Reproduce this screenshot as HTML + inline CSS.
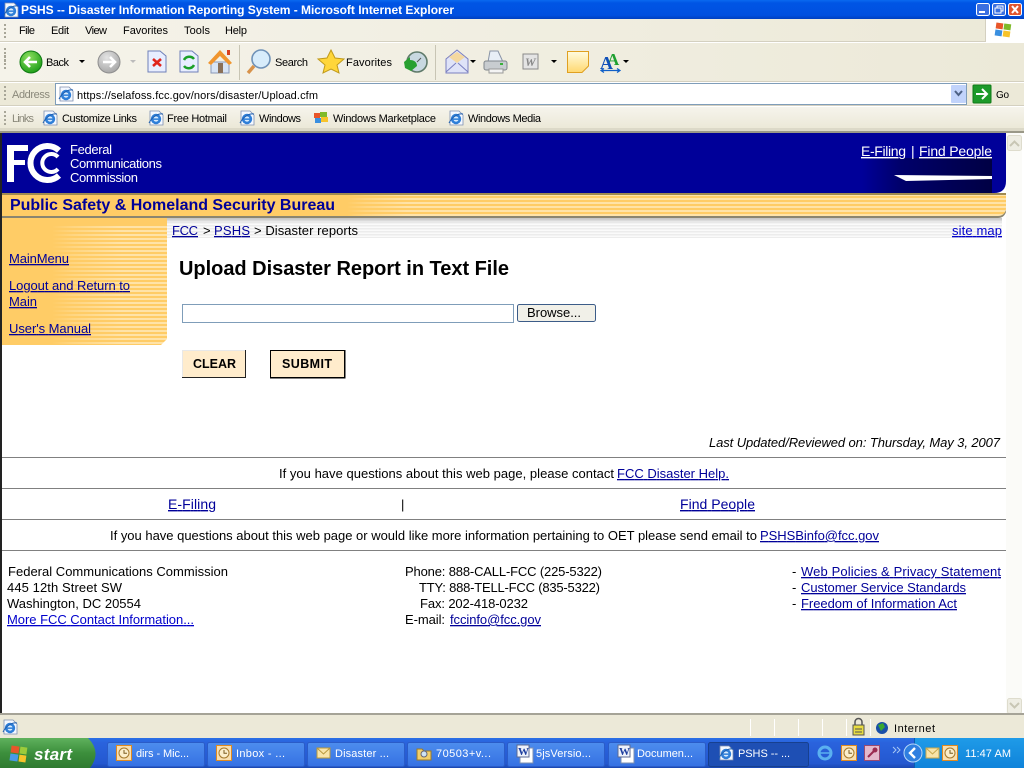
<!DOCTYPE html>
<html><head><meta charset="utf-8"><title>PSHS -- Disaster Information Reporting System</title>
<style>
html,body{margin:0;padding:0;background:#fff;width:1024px;height:768px;overflow:hidden}
svg{display:block;position:absolute;left:0;top:0}
text{font-family:"Liberation Sans",sans-serif;font-size:11px;fill:#000;white-space:pre}
.b{font-size:13px;fill:#000}
.l{font-size:13px;fill:#0000cc;text-decoration:underline}
.d{fill:#000099}
.t{fill:#fff}
.g{fill:#8a887a}
</style></head><body>
<svg width="1024" height="768" viewBox="0 0 1024 768" xmlns="http://www.w3.org/2000/svg">
<defs>
<linearGradient id="tb" x1="0" y1="0" x2="0" y2="1"><stop offset="0" stop-color="#0a6af0"/><stop offset=".15" stop-color="#0055e5"/><stop offset=".8" stop-color="#0050e0"/><stop offset="1" stop-color="#0040c0"/></linearGradient>
<linearGradient id="tlh" x1="0" y1="0" x2="1" y2="0"><stop offset="0" stop-color="#f5f3ea"/><stop offset="1" stop-color="#ece9d8"/></linearGradient>
<linearGradient id="tv" x1="0" y1="0" x2="0" y2="1"><stop offset="0" stop-color="#f6f4ec"/><stop offset="1" stop-color="#ebe8d7"/></linearGradient>
<linearGradient id="task" x1="0" y1="0" x2="0" y2="1"><stop offset="0" stop-color="#2a6fe6"/><stop offset=".15" stop-color="#2a63dd"/><stop offset=".85" stop-color="#2458d0"/><stop offset="1" stop-color="#1a47b0"/></linearGradient>
<linearGradient id="tbtn" x1="0" y1="0" x2="0" y2="1"><stop offset="0" stop-color="#4d8dee"/><stop offset="1" stop-color="#3571e3"/></linearGradient>
<linearGradient id="st" x1="0" y1="0" x2="0" y2="1"><stop offset="0" stop-color="#5fb15d"/><stop offset=".5" stop-color="#3c8f3c"/><stop offset="1" stop-color="#2f7a30"/></linearGradient>
<linearGradient id="tray" x1="0" y1="0" x2="0" y2="1"><stop offset="0" stop-color="#1f9be8"/><stop offset="1" stop-color="#0f83da"/></linearGradient>
<radialGradient id="grn" cx=".4" cy=".3" r=".8"><stop offset="0" stop-color="#8fe060"/><stop offset="1" stop-color="#119611"/></radialGradient>
<radialGradient id="gry" cx=".4" cy=".3" r=".8"><stop offset="0" stop-color="#e4e4e4"/><stop offset="1" stop-color="#a0a0a0"/></radialGradient>
<linearGradient id="note" x1="0" y1="0" x2="0" y2="1"><stop offset="0" stop-color="#fffce0"/><stop offset="1" stop-color="#ffd870"/></linearGradient>
<linearGradient id="fade" x1="0" y1="0" x2="1" y2="0"><stop offset="0" stop-color="#ffcc66"/><stop offset=".3" stop-color="#ffcc66" stop-opacity=".6"/><stop offset="1" stop-color="#ffcc66" stop-opacity="0"/></linearGradient>
<linearGradient id="nav" x1="0" y1="0" x2="1" y2="0"><stop offset="0" stop-color="#000099"/><stop offset=".3" stop-color="#00006a"/><stop offset="1" stop-color="#000044"/></linearGradient>
<linearGradient id="sh" x1="0" y1="0" x2="0" y2="1"><stop offset="0" stop-color="#c0c0c0"/><stop offset="1" stop-color="#c0c0c0" stop-opacity="0"/></linearGradient>
<pattern id="stripe" width="4" height="4" patternUnits="userSpaceOnUse"><rect width="4" height="4" fill="#ffe3a8"/><rect width="4" height="2" fill="#ffcc66"/></pattern>
<pattern id="gstripe" width="4" height="3" patternUnits="userSpaceOnUse"><rect width="4" height="3" fill="#fafafa"/><rect width="4" height="1.5" fill="#ececec"/></pattern>
<g id="ie"><path d="M2 2H11L15 6V16H2Z" fill="#f4f8ff" stroke="#7d8fb0" stroke-width=".8"/><circle cx="8" cy="10" r="5.2" fill="#2f7fd8"/><circle cx="8" cy="10" r="2.6" fill="#d9ecff"/><rect x="5" y="9.4" width="7" height="1.5" fill="#2f7fd8"/><path d="M1 14C4 8 10 4 15 5" fill="none" stroke="#1e5fb0" stroke-width="1"/></g>
<g id="clock"><rect x=".5" y=".5" width="15" height="15" fill="#f8dfb0" stroke="#e08a20"/><circle cx="8" cy="8" r="5" fill="#fbeecb" stroke="#a5792c"/><path d="M8 5V8.3H11" fill="none" stroke="#7a5a20"/></g>
<g id="word"><rect x="3" y="3" width="13" height="15" fill="#fff" stroke="#7d8fb0"/><rect x="0" y="0" width="12" height="12" fill="#eef2fb" stroke="#5d6a90"/><text x="1" y="10" style="font-family:'Liberation Serif',serif;font-size:11px;font-weight:bold;fill:#1f3f9f">W</text></g>
<g id="grip"><rect x="0" y="0" width="2" height="2" fill="#a8a698"/><rect x="0" y="4" width="2" height="2" fill="#a8a698"/><rect x="0" y="8" width="2" height="2" fill="#a8a698"/><rect x="0" y="12" width="2" height="2" fill="#a8a698"/></g>
</defs>

<!-- title bar -->
<rect width="1024" height="19" fill="url(#tb)"/>
<use href="#ie" x="3" y="1"/>
<text x="21" y="14" textLength="433" lengthAdjust="spacing" style="font-size:12px;font-weight:bold;fill:#fff">PSHS -- Disaster Information Reporting System - Microsoft Internet Explorer</text>
<g stroke="#fff" stroke-width="1">
<rect x="976.500" y="3.500" width="13" height="12" rx="2" fill="#3a6fe0"/>
<rect x="992.500" y="3.500" width="13" height="12" rx="2" fill="#3a6fe0"/>
<rect x="1008.500" y="3.500" width="13" height="12" rx="2" fill="#e0552e"/>
</g>
<rect x="979" y="11" width="6" height="2" fill="#fff"/>
<rect x="997" y="6" width="6" height="5" fill="none" stroke="#fff"/><rect x="995" y="8" width="6" height="5" fill="#3a6fe0" stroke="#fff"/>
<path d="M1012 6L1018 13M1018 6L1012 13" stroke="#fff" stroke-width="2"/>

<!-- chrome -->
<rect y="19" width="1024" height="114" fill="#ece9d8"/>
<rect y="19" width="1024" height="22" fill="url(#tlh)"/>
<rect y="41" width="1024" height="1" fill="#d4d0c0"/><rect y="42" width="1024" height="1" fill="#fff"/>
<rect y="43" width="1024" height="38" fill="url(#tlh)"/>
<rect y="81" width="1024" height="1" fill="#d4d0c0"/><rect y="82" width="1024" height="1" fill="#fff"/>
<rect y="105" width="1024" height="1" fill="#d4d0c0"/><rect y="106" width="1024" height="1" fill="#fff"/>
<rect y="107" width="1024" height="22" fill="url(#tv)"/>
<rect y="128" width="1024" height="5" fill="#dcd9c8"/>
<rect x="985" y="19" width="39" height="23" fill="#fff"/><rect x="985" y="19" width="1" height="23" fill="#d4d0c0"/>
<rect x="996" y="23" width="7" height="6" fill="#e8562a" transform="rotate(8 1000 26)"/><rect x="1004" y="24" width="7" height="6" fill="#7fba2a" transform="rotate(8 1008 26)"/><rect x="995" y="30" width="7" height="6" fill="#3a8fe0" transform="rotate(8 999 33)"/><rect x="1003" y="31" width="7" height="6" fill="#f7c32a" transform="rotate(8 1007 34)"/>
<use href="#grip" x="4" y="24"/><use href="#grip" x="4" y="48"/><use href="#grip" x="4" y="55"/><use href="#grip" x="4" y="86"/><use href="#grip" x="4" y="111"/>

<text x="19" y="34" textLength="16" lengthAdjust="spacing">File</text>
<text x="51" y="34" textLength="18" lengthAdjust="spacing">Edit</text>
<text x="85" y="34" textLength="22" lengthAdjust="spacing">View</text>
<text x="123" y="34" textLength="45" lengthAdjust="spacing">Favorites</text>
<text x="184" y="34" textLength="26" lengthAdjust="spacing">Tools</text>
<text x="225" y="34" textLength="22" lengthAdjust="spacing">Help</text>

<!-- toolbar -->
<circle cx="31" cy="62" r="11" fill="url(#grn)" stroke="#0f7a12"/>
<path d="M37 62H26M30 57L25 62L30 67" fill="none" stroke="#fff" stroke-width="2.6"/>
<text x="46" y="66" textLength="23" lengthAdjust="spacing">Back</text>
<path d="M79 60H85L82 63Z" fill="#000"/>
<circle cx="109" cy="62" r="11" fill="url(#gry)" stroke="#8e8e8e"/>
<path d="M103 62H114M110 57L115 62L110 67" fill="none" stroke="#fff" stroke-width="2.6"/>
<path d="M130 60H136L133 63Z" fill="#bbb"/>
<path d="M148 51H160L166 56V72H148Z" fill="#e8eeff" stroke="#6f80b8"/><path d="M153 59L161 66M161 59L153 66" stroke="#e0241c" stroke-width="2.6"/>
<path d="M180 51H192L198 56V72H180Z" fill="#e8eeff" stroke="#6f80b8"/><path d="M184 60A6 6 0 0 1 194 59M194 65A6 6 0 0 1 184 66" fill="none" stroke="#1ba028" stroke-width="2.5"/>
<path d="M211 62H229V73H211Z" fill="#d8e4f4" stroke="#8a99b8"/><path d="M208 63L220 50L232 63L229 65L220 56L211 65Z" fill="#f0952e"/><rect x="218" y="63" width="5" height="10" fill="#8a7058"/><rect x="227" y="50" width="3" height="5" fill="#d8401e"/>
<rect x="239" y="45" width="1" height="35" fill="#c8c5b4"/>
<circle cx="261" cy="59" r="9" fill="#d7ecfb" stroke="#6f92b8" stroke-width="1.6"/><path d="M254 66L248 73" stroke="#d8924a" stroke-width="3.4"/>
<text x="275" y="66" textLength="33" lengthAdjust="spacing">Search</text>
<path d="M331 50L335 58L344 59L337 65L339 73L331 69L323 73L325 65L318 59L327 58Z" fill="#ffd63a" stroke="#c09a1a"/>
<text x="346" y="66" textLength="46" lengthAdjust="spacing">Favorites</text>
<circle cx="417" cy="62" r="10" fill="#c8d8e0" stroke="#5f7a6a" stroke-width="1.6"/><path d="M404 62L410 57V60C414 60 417 62 417 66L411 71L405 68Z" fill="#28a030"/><path d="M417 62L421 58" stroke="#555"/>
<rect x="435" y="45" width="1" height="35" fill="#c8c5b4"/>
<path d="M446 59L457 50L468 59V73H446Z" fill="#dfe3f8" stroke="#7a7fc0"/><path d="M449 57L457 52L465 57L457 63Z" fill="#f4d8a0"/><path d="M446 72L456 63M468 72L458 63" stroke="#7a7fc0"/>
<path d="M470 60H476L473 63Z" fill="#000"/>
<path d="M490 51H498L503 62H488Z" fill="#e8eef6" stroke="#8a94a6"/><rect x="484" y="61" width="23" height="9" rx="2" fill="#c8ccd0" stroke="#80868c"/><rect x="489" y="69" width="14" height="4" fill="#f4f4f4" stroke="#999"/><rect x="500" y="63" width="3" height="2" fill="#3ab03a"/>
<rect x="523" y="54" width="15" height="15" fill="#e4e4e4" stroke="#8a8a8a"/><text x="525" y="66" style="font-family:'Liberation Serif',serif;font-size:12px;font-style:italic;font-weight:bold;fill:#888">W</text>
<path d="M551 60H557L554 63Z" fill="#000"/>
<path d="M567.500 51.500H588.500V66L582 72.500H567.500Z" fill="url(#note)" stroke="#e0a020"/>
<text x="607" y="65" style="font-family:'Liberation Serif',serif;font-size:17px;font-weight:bold;fill:#1fa030">A</text>
<text x="600" y="69" style="font-family:'Liberation Serif',serif;font-size:18px;font-weight:bold;fill:#1050b8">A</text>
<path d="M602 70.500H619M604 68.500L601 70.500L604 72.500M617 68.500L620 70.500L617 72.500" fill="none" stroke="#1060c8" stroke-width="1.2"/>
<path d="M623 60H629L626 63Z" fill="#000"/>

<!-- address -->
<text x="12" y="98" textLength="38" lengthAdjust="spacing" class="g">Address</text>
<rect x="55.500" y="83.500" width="911" height="21" fill="#fff" stroke="#7f9db9"/>
<use href="#ie" x="58" y="85"/>
<text x="77" y="99" textLength="241" lengthAdjust="spacing">https://selafoss.fcc.gov/nors/disaster/Upload.cfm</text>
<rect x="951" y="85" width="15" height="18" rx="1" fill="#c1d3fb"/><path d="M955 91L958.500 95L962 91" fill="none" stroke="#4d6185" stroke-width="2"/>
<rect x="973" y="85" width="18" height="18" rx="1" fill="#1d9a2a" stroke="#0f7a18"/><path d="M976 94H987M982 89L987 94L982 99" fill="none" stroke="#fff" stroke-width="2"/>
<text x="996" y="98" textLength="13" lengthAdjust="spacing" style="font-size:10px">Go</text>

<!-- links -->
<text x="12" y="122" textLength="22" lengthAdjust="spacing" class="g">Links</text>
<use href="#ie" x="42" y="109"/><text x="62" y="122" textLength="75" lengthAdjust="spacing">Customize Links</text>
<use href="#ie" x="148" y="109"/><text x="167" y="122" textLength="60" lengthAdjust="spacing">Free Hotmail</text>
<use href="#ie" x="239" y="109"/><text x="259" y="122" textLength="42" lengthAdjust="spacing">Windows</text>
<rect x="314" y="113" width="6" height="5" fill="#e8562a"/><rect x="320" y="112" width="7" height="5" fill="#7fba2a"/><rect x="315" y="118" width="6" height="5" fill="#3a8fe0"/><rect x="321" y="117" width="7" height="5" fill="#f7c32a"/>
<text x="333" y="122" textLength="103" lengthAdjust="spacing">Windows Marketplace</text>
<use href="#ie" x="448" y="109"/><text x="468" y="122" textLength="73" lengthAdjust="spacing">Windows Media</text>

<!-- page -->
<rect y="133" width="1024" height="581" fill="#fff"/>
<rect x="0" y="133" width="2" height="581" fill="#222"/>
<rect x="0" y="131" width="1024" height="2" fill="#9a9888"/>

<!-- orange strip -->
<path d="M2 193H1006V208Q1006 216 998 216H2Z" fill="url(#stripe)"/>
<rect x="2" y="193" width="345" height="23" fill="#ffcc66"/>
<rect x="347" y="193" width="60" height="23" fill="url(#fade)"/>
<rect x="2" y="193" width="1004" height="2" fill="#a08a50"/>
<path d="M2 216H998Q1004 216 1006 210V212Q1004 218 998 218H2Z" fill="#8a8570"/>
<rect x="167" y="218" width="835" height="20" fill="url(#gstripe)"/>
<rect x="167" y="218" width="835" height="5" fill="url(#sh)"/>
<!-- blue banner -->
<path d="M2 133H1006V181Q1006 193 994 193H2Z" fill="#000099"/>
<rect x="862" y="158" width="130" height="35" fill="url(#nav)"/>
<path d="M894 175L906 181L992 179V176Z" fill="#fff"/>
<text x="861" y="156" style="font-size:14px;fill:#fff;text-decoration:underline" textLength="45" lengthAdjust="spacing">E-Filing</text>
<text x="911" y="156" style="font-size:14px;fill:#fff">|</text>
<text x="919" y="156" style="font-size:14px;fill:#fff;text-decoration:underline" textLength="73" lengthAdjust="spacing">Find People</text>
<!-- FCC logo -->
<path d="M7 145H28V151H14V160H25V165H14V182H7Z" fill="#fff"/>
<path d="M59 150.500A17 17 0 1 0 59 175.500" fill="none" stroke="#fff" stroke-width="6"/>
<path d="M58 157A9 9 0 1 0 58 169" fill="none" stroke="#fff" stroke-width="4"/>
<text x="70" y="154" textLength="42" lengthAdjust="spacing" style="font-size:13px;fill:#fff">Federal</text>
<text x="70" y="168" textLength="92" lengthAdjust="spacing" style="font-size:13px;fill:#fff">Communications</text>
<text x="70" y="182" textLength="68" lengthAdjust="spacing" style="font-size:13px;fill:#fff">Commission</text>
<text x="10" y="210" textLength="325" lengthAdjust="spacing" style="font-size:16px;font-weight:bold;fill:#000099">Public Safety &amp; Homeland Security Bureau</text>

<!-- sidebar -->
<path d="M2 218H167V339L161 345H2Z" fill="url(#stripe)"/>
<rect x="2" y="218" width="50" height="127" fill="#ffcc66"/>
<rect x="52" y="218" width="70" height="127" fill="url(#fade)"/>
<rect x="2" y="218" width="165" height="7" fill="#ffcc66"/>

<text x="172" y="235" class="l" textLength="26" lengthAdjust="spacing" style="fill:#000099">FCC</text>
<text x="203" y="235" class="b">&gt;</text>
<text x="214" y="235" class="l" textLength="36" lengthAdjust="spacing" style="fill:#000099">PSHS</text>
<text x="254" y="235" class="b" textLength="104" lengthAdjust="spacing">&gt; Disaster reports</text>
<text x="952" y="235" class="l" textLength="50" lengthAdjust="spacing">site map</text>

<text x="9" y="263" class="l" textLength="60" lengthAdjust="spacing" style="fill:#000099">MainMenu</text>
<text x="9" y="290" class="l" textLength="121" lengthAdjust="spacing" style="fill:#000099">Logout and Return to</text>
<text x="9" y="306" class="l" textLength="28" lengthAdjust="spacing" style="fill:#000099">Main</text>
<text x="9" y="333" class="l" textLength="82" lengthAdjust="spacing" style="fill:#000099">User's Manual</text>

<text x="179" y="275" textLength="330" lengthAdjust="spacing" style="font-size:20px;font-weight:bold">Upload Disaster Report in Text File</text>

<rect x="182.500" y="304.500" width="331" height="18" fill="#fff" stroke="#7f9db9"/>
<rect x="517.500" y="304.500" width="78" height="17" rx="2" fill="#f1f0e8" stroke="#3c5c88"/>
<text x="527" y="317" class="b" textLength="54" lengthAdjust="spacing">Browse...</text>

<rect x="183" y="351" width="62" height="26" fill="#ffeccc"/>
<path d="M182.500 377.500V350.500H245.500V377.500Z" fill="none" stroke="#e8e8e8"/>
<path d="M182 377.500H245.500V350" fill="none" stroke="#222"/>
<text x="193" y="368" textLength="43" lengthAdjust="spacing" style="font-size:12.500px;font-weight:bold">CLEAR</text>
<rect x="270.500" y="350.500" width="74" height="27" fill="#ffeccc" stroke="#000"/>
<path d="M270 378H345V350" fill="none" stroke="#000"/>
<text x="282" y="368" textLength="50" lengthAdjust="spacing" style="font-size:12.500px;font-weight:bold">SUBMIT</text>

<text x="709" y="447" class="b" textLength="291" lengthAdjust="spacing" style="font-style:italic">Last Updated/Reviewed on: Thursday, May 3, 2007</text>

<g fill="#808080"><rect x="2" y="457" width="1004" height="1"/><rect x="2" y="488" width="1004" height="1"/><rect x="2" y="519" width="1004" height="1"/><rect x="2" y="550" width="1004" height="1"/></g>

<text x="279" y="478" class="b" textLength="335" lengthAdjust="spacing">If you have questions about this web page, please contact</text>
<text x="617" y="478" class="l" textLength="112" lengthAdjust="spacing" style="fill:#000099">FCC Disaster Help.</text>
<text x="168" y="509" class="l" textLength="48" lengthAdjust="spacing" style="fill:#000099;font-size:14px">E-Filing</text>
<text x="401" y="509" class="b">|</text>
<text x="680" y="509" class="l" textLength="75" lengthAdjust="spacing" style="fill:#000099;font-size:14px">Find People</text>
<text x="110" y="540" class="b" textLength="647" lengthAdjust="spacing">If you have questions about this web page or would like more information pertaining to OET please send email to</text>
<text x="760" y="540" class="l" textLength="119" lengthAdjust="spacing" style="fill:#000099">PSHSBinfo@fcc.gov</text>

<text x="8" y="576" class="b" textLength="220" lengthAdjust="spacing">Federal Communications Commission</text>
<text x="7" y="592" class="b" textLength="115" lengthAdjust="spacing">445 12th Street SW</text>
<text x="7" y="608" class="b" textLength="134" lengthAdjust="spacing">Washington, DC 20554</text>
<text x="7" y="624" class="l" textLength="187" lengthAdjust="spacing">More FCC Contact Information...</text>

<text x="405" y="576" class="b" textLength="197" lengthAdjust="spacing">Phone: 888-CALL-FCC (225-5322)</text>
<text x="419" y="592" class="b" textLength="181" lengthAdjust="spacing">TTY: 888-TELL-FCC (835-5322)</text>
<text x="420" y="608" class="b" textLength="108" lengthAdjust="spacing">Fax: 202-418-0232</text>
<text x="405" y="624" class="b" textLength="40" lengthAdjust="spacing">E-mail:</text>
<text x="450" y="624" class="l" textLength="91" lengthAdjust="spacing" style="fill:#000099">fccinfo@fcc.gov</text>

<text x="792" y="576" class="b">-</text><text x="801" y="576" class="l" textLength="200" lengthAdjust="spacing" style="fill:#000099">Web Policies &amp; Privacy Statement</text>
<text x="792" y="592" class="b">-</text><text x="801" y="592" class="l" textLength="165" lengthAdjust="spacing" style="fill:#000099">Customer Service Standards</text>
<text x="792" y="608" class="b">-</text><text x="801" y="608" class="l" textLength="156" lengthAdjust="spacing" style="fill:#000099">Freedom of Information Act</text>

<!-- scrollbar -->
<rect x="1006" y="133" width="16" height="581" fill="#fbfbf8"/>
<rect x="1022" y="133" width="2" height="581" fill="#fff"/>
<rect x="1007.500" y="135.500" width="14" height="15" rx="2" fill="#eeede3" stroke="#dedccd"/>
<path d="M1010 146L1014.500 141.500L1019 146" fill="none" stroke="#c8c6b4" stroke-width="2"/>
<rect x="1007.500" y="698.500" width="14" height="15" rx="2" fill="#eeede3" stroke="#dedccd"/>
<path d="M1010 703L1014.500 707.500L1019 703" fill="none" stroke="#c8c6b4" stroke-width="2"/>
<rect x="0" y="713" width="1024" height="2" fill="#a5a397"/>

<!-- status bar -->
<rect y="715" width="1024" height="23" fill="#ece9d8"/>
<use href="#ie" x="2" y="718"/>
<g fill="#fff"><rect x="750" y="719" width="1" height="17"/><rect x="774" y="719" width="1" height="17"/><rect x="798" y="719" width="1" height="17"/><rect x="822" y="719" width="1" height="17"/><rect x="846" y="719" width="1" height="17"/><rect x="870" y="719" width="1" height="17"/></g>
<rect x="853" y="725" width="11" height="10" fill="#e8dc40" stroke="#555"/><path d="M855 725V722A3 3 0 0 1 862 722V725" fill="none" stroke="#555" stroke-width="1.500"/><path d="M855 729H862M855 732H862" stroke="#555"/>
<circle cx="882" cy="728" r="6" fill="#1a4fa8"/><path d="M878 725L883 723L885 727L881 731Z" fill="#3aa830"/>
<text x="894" y="732" textLength="41" lengthAdjust="spacing">Internet</text>

<!-- taskbar -->
<rect y="738" width="1024" height="30" fill="url(#task)"/>
<path d="M0 738H88Q102 752 90 768H0Z" fill="url(#st)"/>
<rect x="11" y="746" width="8" height="7" fill="#e8562a" transform="rotate(8 15 750)"/><rect x="20" y="747" width="7" height="7" fill="#9ccb3b" transform="rotate(8 23 750)"/><rect x="10" y="754" width="8" height="7" fill="#4a9ae8" transform="rotate(8 14 757)"/><rect x="19" y="755" width="7" height="7" fill="#f7c32a" transform="rotate(8 22 758)"/>
<text x="34" y="760" textLength="38" lengthAdjust="spacing" style="font-size:17px;font-weight:bold;font-style:italic;fill:#fff">start</text>

<g fill="url(#tbtn)" stroke="#2a5cc8">
<rect x="107.500" y="742.500" width="97" height="24" rx="2"/>
<rect x="207.500" y="742.500" width="97" height="24" rx="2"/>
<rect x="307.500" y="742.500" width="97" height="24" rx="2"/>
<rect x="407.500" y="742.500" width="97" height="24" rx="2"/>
<rect x="507.500" y="742.500" width="97" height="24" rx="2"/>
<rect x="608.500" y="742.500" width="97" height="24" rx="2"/>
</g>
<rect x="708.500" y="742.500" width="100" height="24" rx="2" fill="#1e4fb4" stroke="#17408f"/>
<use href="#clock" x="116" y="745"/><text x="136" y="757" textLength="53" lengthAdjust="spacing" class="t">dirs - Mic...</text>
<use href="#clock" x="216" y="745"/><text x="236" y="757" textLength="49" lengthAdjust="spacing" class="t">Inbox - ...</text>
<path d="M317 748H330V758H317Z" fill="#f8e4a8" stroke="#b8983c"/><path d="M317 748L323.500 754L330 748" fill="none" stroke="#b8983c"/>
<text x="335" y="757" textLength="54" lengthAdjust="spacing" class="t">Disaster ...</text>
<path d="M417 749H422L424 751H431V760H417Z" fill="#f2cf6a" stroke="#9a7a28"/><circle cx="424" cy="754" r="3" fill="#cfe4f5" stroke="#667"/>
<text x="436" y="757" textLength="55" lengthAdjust="spacing" class="t">70503+v...</text>
<use href="#word" x="517" y="745"/><text x="536" y="757" textLength="55" lengthAdjust="spacing" class="t">5jsVersio...</text>
<use href="#word" x="618" y="745"/><text x="637" y="757" textLength="56" lengthAdjust="spacing" class="t">Documen...</text>
<use href="#ie" x="718" y="744"/><text x="738" y="757" textLength="52" lengthAdjust="spacing" class="t">PSHS -- ...</text>

<circle cx="825" cy="753" r="6" fill="none" stroke="#5ab0f0" stroke-width="3"/><path d="M818 753H832" stroke="#5ab0f0" stroke-width="1.500"/>
<use href="#clock" x="841" y="745"/>
<rect x="864.500" y="745.500" width="15" height="15" fill="#e4b8cc" stroke="#9a4a70"/><path d="M868 757L874 751" stroke="#9a2a50" stroke-width="2"/><circle cx="875" cy="750" r="2.500" fill="#9a2a50"/>
<path d="M893 747L896 750L893 753M897 747L900 750L897 753" fill="none" stroke="#a8c8f4"/>
<path d="M914 738H1024V768H914Z" fill="url(#tray)"/>
<rect x="914" y="738" width="1" height="30" fill="#0a5cb0"/>
<circle cx="913" cy="753" r="9" fill="#2f7fe0" stroke="#b8d8f8"/><path d="M915 748L910 753L915 758" fill="none" stroke="#fff" stroke-width="2.400"/>
<path d="M926 748H939V758H926Z" fill="#f8e4a8" stroke="#c8a84c"/><path d="M926 748L932.500 754L939 748" fill="none" stroke="#c8a84c"/>
<use href="#clock" x="942" y="745"/>
<text x="965" y="757" textLength="46" lengthAdjust="spacing" class="t">11:47 AM</text>
</svg>
</body></html>
